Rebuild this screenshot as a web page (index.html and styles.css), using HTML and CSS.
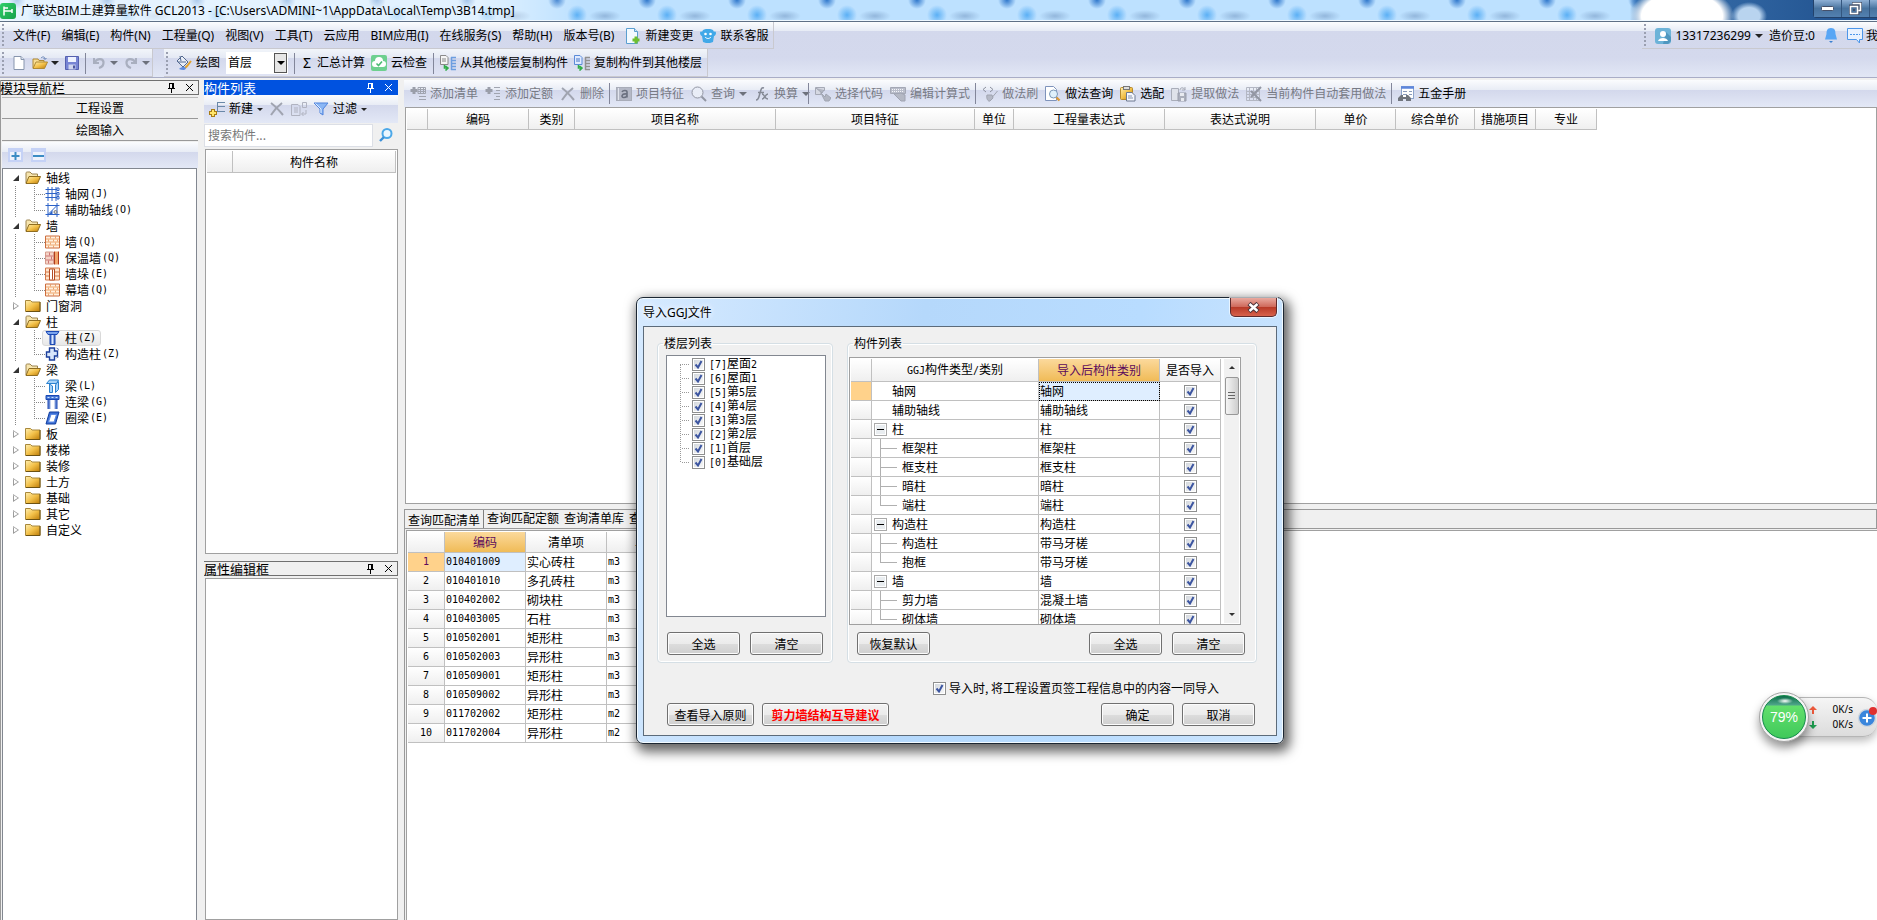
FILE: index.html
```html
<!DOCTYPE html>
<html lang="zh-CN">
<head>
<meta charset="utf-8">
<title>广联达BIM土建算量软件 GCL2013</title>
<link rel="stylesheet" href="styles.css">
</head>
<body>
<svg class="defs" aria-hidden="true">
  <defs>
    <linearGradient id="gold" x1="0" y1="0" x2="1" y2="1"><stop offset="0" stop-color="#ffefb0"/><stop offset=".5" stop-color="#f3c14a"/><stop offset="1" stop-color="#bd7c08"/></linearGradient>
    <linearGradient id="blue" x1="0" y1="0" x2="1" y2="0"><stop offset="0" stop-color="#1b48b4"/><stop offset=".5" stop-color="#dbe9ff"/><stop offset="1" stop-color="#1b48b4"/></linearGradient>
    <linearGradient id="green" x1="0" y1="0" x2="1" y2="1"><stop offset="0" stop-color="#2fcf6a"/><stop offset="1" stop-color="#17a04a"/></linearGradient>
  </defs>
  <symbol id="app" viewBox="0 0 16 16"><rect x="0" y="0" width="16" height="16" rx="3" fill="url(#green)"/><path d="M4 3.500v9M4 5h4M4 8h8M12 6v4" stroke="#fff" stroke-width="1.500" fill="none"/></symbol>
  <symbol id="new" viewBox="0 0 16 16"><path d="M3 1.500h7l3 3v10H3z" fill="#fff" stroke="#8795ad"/><path d="M10 1.500v3h3" fill="#dde5f2" stroke="#8795ad"/></symbol>
  <symbol id="open" viewBox="0 0 16 16"><path d="M1 13V4h5l1 1.500h5V7" fill="#f7dd94" stroke="#b08a34"/><path d="M1 13.500 4 7h11.500l-3 6.500z" fill="url(#gold)" stroke="#b08a34"/><path d="M9 3c2-2 4-1 4 1m-1.500-1 1.500 1.500L14.500 3" fill="none" stroke="#6683b5"/></symbol>
  <symbol id="save" viewBox="0 0 16 16"><path d="M1.500 1.500h13v13h-13z" fill="#7784d4" stroke="#5560ae"/><path d="M4 2h8v5H4z" fill="#eef2ff"/><path d="M4.500 9.500h7v5h-7z" fill="#cfd5ee"/><path d="M9 10.500h2v3H9z" fill="#4c57a0"/></symbol>
  <symbol id="undo" viewBox="0 0 16 16"><path d="M3 3v5h5" fill="none" stroke="#a9afbf" stroke-width="2"/><path d="M3.500 7.500C6 3 12 3 12.500 7c.3 3-1.500 5-4.500 6" fill="none" stroke="#a9afbf" stroke-width="2.200"/></symbol>
  <symbol id="redo" viewBox="0 0 16 16"><path d="M13 3v5H8" fill="none" stroke="#a9afbf" stroke-width="2"/><path d="M12.500 7.500C10 3 4 3 3.500 7c-.3 3 1.500 5 4.500 6" fill="none" stroke="#a9afbf" stroke-width="2.200"/></symbol>
  <symbol id="paint" viewBox="0 0 16 16"><path d="M1 6 6 1l6 6-5 5z" fill="#e9eef8" stroke="#53698f"/><path d="M5 6 4 1M2 7h8" stroke="#53698f" fill="none"/><path d="m15 6-4 5-2 2" stroke="#e3a32c" stroke-width="2" fill="none"/><path d="M3 14c3-3 6-2 7-1-1 3-4 2-7 1" fill="#5d8ce0"/></symbol>
  <symbol id="cloudok" viewBox="0 0 16 16"><rect width="16" height="16" rx="2" fill="#6ed08f"/><path d="M4 12a3 3 0 0 1 0-6 4 4 0 0 1 8 0 3 3 0 0 1 0 6z" fill="#fff"/><path d="m5.500 8.500 2 2 3.500-4" fill="none" stroke="#4dbb74" stroke-width="1.600"/></symbol>
  <symbol id="copyfrom" viewBox="0 0 16 16"><path d="M.5.500H6l2 2v7H.5z" fill="#f5f5f5" stroke="#8a8a8a"/><path d="M2 4h4M2 6h4" stroke="#888"/><path d="M11 2.500h5M11 5.500h5M11 8.500h5M11 11.500h5M11 14.500h5M11.500 2v13" stroke="#6d9ee0" stroke-width="1.500"/><path d="M4.500 10v3H8M5.500 11 8 13l-2.500 2.500" fill="none" stroke="#32ae4a" stroke-width="1.600"/></symbol>
  <symbol id="copyto" viewBox="0 0 16 16"><path d="M.5.500H6l2 2v7H.5z" fill="#dfeaff" stroke="#5b8bd8"/><path d="M2 4h4M2 6h4" stroke="#4776c6"/><path d="M11 2.500h5M11 5.500h5M11 8.500h5M11 11.500h5M11 14.500h5M11.500 2v13" stroke="#909090" stroke-width="1.500"/><path d="M4.500 10v3H8M5.500 11 8 13l-2.500 2.500" fill="none" stroke="#32ae4a" stroke-width="1.600"/></symbol>
  <symbol id="docplus" viewBox="0 0 16 16"><path d="M1.500.5h8l3 3v12h-11z" fill="#f3faff" stroke="#5b9fd0"/><path d="M9.500.5v3h3" fill="#cfe6f5" stroke="#5b9fd0"/><path d="M11 8.500v7M7.500 12h7" stroke="#6fbf2f" stroke-width="3"/></symbol>
  <symbol id="service" viewBox="0 0 16 16"><path d="M0 5c0-1 1-2 2-1 1-3 3-3 6-3s5 0 6 3c1-1 2 0 2 1s-1 3-2 3l-1 6-3 1H6l-3-1-1-6C1 8 0 6 0 5z" fill="#41a8e8"/><circle cx="5.500" cy="6" r="1.300" fill="#fff"/><circle cx="10.500" cy="6" r="1.300" fill="#fff"/><path d="M5 9c2 2 4 2 6 0" stroke="#fff" fill="none"/></symbol>
  <symbol id="user" viewBox="0 0 16 16"><rect width="16" height="16" rx="3" fill="#6db3d8"/><path d="m11 4 5 5v4l-3 3H8z" fill="#4f97bf"/><circle cx="8" cy="6" r="3" fill="#fff"/><path d="M3 13c1-4 9-4 10 0z" fill="#fff"/></symbol>
  <symbol id="bell" viewBox="0 0 16 16"><path d="M8 0c4 0 4.500 3 4.500 6l1.500 5.500H2L3.500 6C3.500 3 4 0 8 0z" fill="#58a6f5"/><path d="M6 13h4l-2 2z" fill="#3a80d0"/></symbol>
  <symbol id="chat" viewBox="0 0 16 16"><path d="M.5.500h15v11h-3v3.500l-3-3.500h-9z" fill="#e8f2ff" stroke="#4c96ea"/><path d="M3 6.500h2M6 6.500h2M9 6.500h2M12 6.500h1" stroke="#4c96ea"/></symbol>
  <symbol id="pin" viewBox="0 0 9 10"><path d="M2 .5h5M2.500.5v5M6.500.5v5M5.500.5v5M1 5.500h7M4.500 6v4" fill="none" stroke="currentColor"/></symbol>
  <symbol id="close" viewBox="0 0 9 9"><path d="m1 1 7 7M8 1 1 8" fill="none" stroke="currentColor"/></symbol>
  <symbol id="expand" viewBox="0 0 16 16"><rect x="0" y="1" width="15" height="14" fill="#c5d2f6"/><rect x="2" y="5" width="11" height="8" fill="#eef2fc"/><path d="M7.500 5v8M3.500 9h8" stroke="#3c8cc4" stroke-width="2"/></symbol>
  <symbol id="collapse" viewBox="0 0 16 16"><rect x="0" y="1" width="15" height="14" fill="#c5d2f6"/><rect x="2" y="5" width="11" height="8" fill="#eef2fc"/><path d="M2 9h11" stroke="#3c8cc4" stroke-width="2"/></symbol>
  <symbol id="newitem" viewBox="0 0 16 16"><path d="M8 1.500h8M8 5.500h8M8 10.500h8M8.500 1v10" stroke="#6a88a8" fill="none"/><path d="M4 8v8M0 12h8" stroke="#a97d14" stroke-width="4"/><path d="M4 9v6M1 12h6" stroke="#ffe56b" stroke-width="2"/></symbol>
  <symbol id="del" viewBox="0 0 16 16"><path d="M2 2c4 3 7 6 12 12M13 2C9 5 5 9 2 14" stroke="#a0a4b0" stroke-width="2" fill="none"/></symbol>
  <symbol id="copyitem" viewBox="0 0 16 16"><path d="M.5 3.500H7l2 2v9H.5zM3 7h4M3 9h4M3 11h4M11.500 1.500h4v5h-4zM15 9v4h-4m1.500-2-2 2 2 2" stroke="#b0b3c0" fill="none"/></symbol>
  <symbol id="funnel" viewBox="0 0 16 16"><path d="M1 2h14L10 8v6l-3-2V8z" fill="#8ab6f5" stroke="#4f83dd"/><path d="M2.500 2.500 8 8v4" stroke="#e5f1ff" fill="none"/></symbol>
  <symbol id="search" viewBox="0 0 16 16"><circle cx="9" cy="6.500" r="4.500" fill="#eaf6ff" stroke="#4ca8e8" stroke-width="2"/><path d="m6 10-4 4" stroke="#3b90d8" stroke-width="2.400"/></symbol>
  <symbol id="addlist" viewBox="0 0 16 16"><path d="M4 1v7M.5 4.500h7" stroke="#9a9ea9" stroke-width="3"/><path d="M8 1.500h7.500v6H8zM8 3.500h8M8 5.500h8M10.500 2v6M13.500 2v6M9 10.500h7M9 13.500h7" stroke="#a0a4af" fill="none"/></symbol>
  <symbol id="addnorm" viewBox="0 0 16 16"><path d="M4 1v7M.5 4.500h7" stroke="#9a9ea9" stroke-width="3"/><path d="M9 1.500h6M11 4.500h4M9 7.500h6M11 10.500h4M9 13.500h6" stroke="#a0a4af" fill="none"/></symbol>
  <symbol id="feature" viewBox="0 0 16 16"><rect x=".5" y="1.500" width="15" height="13" fill="#b4b8c6" stroke="#a8acb8"/><path d="M2.500 2v12" stroke="#e2e5ee"/><path d="M6 6c1-2 5-2 5 0v5.500M11 8c-6-1-6 4-3 3.500 2 0 3-1.500 3-2.500" fill="none" stroke="#6a707f" stroke-width="1.600"/></symbol>
  <symbol id="mag" viewBox="0 0 16 16"><circle cx="6.500" cy="6.500" r="5.500" fill="#e9edf7" stroke="#9296a3"/><path d="m10.500 10.500 4.500 4.500" stroke="#9296a3" stroke-width="2"/></symbol>
  <symbol id="fx" viewBox="0 0 16 16"><path d="M10 2C7 1 7 4 6 7s-1 7-4 7M4 6.500h6M8 8c3 0 2 5 6 5M14 8c-3 0-3 5-6 5" stroke="#858a96" stroke-width="1.500" fill="none"/></symbol>
  <symbol id="code" viewBox="0 0 16 16"><path d="M.5 1.500h9v3H6v4H.5z" fill="#d5d8e2" stroke="#a5a9b5"/><path d="m1 2 6 5 2-3M6 7l4 4 1-3 5 4-2 3h-4z" fill="#b1b5c1" stroke="#a0a5b2"/></symbol>
  <symbol id="edit" viewBox="0 0 16 16"><path d="M.5 1.500h15v6H.5z" fill="#b9bdca" stroke="#a4a8b5"/><path d="M2 3.500h12M2 5.500h12" stroke="#f4f5f9" stroke-dasharray="1 1"/><path d="m4 8 7 7h4V9l-4-2z" fill="#b4b8c4" stroke="#a0a4b2"/></symbol>
  <symbol id="brush" viewBox="0 0 16 16"><path d="M4 1 1 3.500 4 6M8 1l3 2.500L8 6" stroke="#8d919e" fill="none"/><path d="m15.500 5-5 6M5 9h5l1 3-3 3c-2 1-4-3-3-6z" fill="#b5b9c6" stroke="#a0a4b0"/></symbol>
  <symbol id="docfind" viewBox="0 0 16 16"><path d="M.5.500h8l3 3v11H.5z" fill="#fff" stroke="#7e93bb"/><circle cx="8.500" cy="8" r="4" fill="#dff1fb" stroke="#7a98b8"/><path d="m11.500 11.500 3 3" stroke="#d99a3a" stroke-width="2.400"/></symbol>
  <symbol id="paste" viewBox="0 0 16 16"><rect x=".5" y="1.500" width="12" height="12" rx="1" fill="url(#gold)" stroke="#b5892c"/><rect x="3.500" y=".5" width="6" height="3" fill="#ddd" stroke="#777"/><path d="M6.500 6.500H12l3 3v5.500H6.500z" fill="#f6f8ff" stroke="#6d7990"/><path d="M8 10h4M8 12h5" stroke="#8894ab"/></symbol>
  <symbol id="extract" viewBox="0 0 16 16"><path d="M.5 2.500h7v12h-7zM9 4c0-3 4-3 5 0m0-3v3h-3" fill="#dfe2ea" stroke="#a9adb9"/><path d="M7 7h8v8H7z" fill="#abafbc" stroke="#999dab"/><path d="M9 7h4v3H9zM10 12h3v3h-3z" fill="#e8eaf0"/></symbol>
  <symbol id="auto" viewBox="0 0 16 16"><path d="M.5 1.500h13v13H.5zM.5 5.500h13M.5 8.500h13M.5 11.500h13M3.500 1.500v13M7.500 1.500v13M10.500 1.500v13" fill="none" stroke="#b3b7c3"/><path d="m5 5 10 10M15 1 5 11" stroke="#9296a3" stroke-width="2"/></symbol>
  <symbol id="manual" viewBox="0 0 16 16"><rect x="3.500" y=".5" width="12" height="12" fill="#fff" stroke="#8da4cc"/><path d="M3 1.500h13" stroke="#5d86dc" stroke-width="2.500"/><path d="M5 5.500h4M11 5.500h3M5 8.500h4M11 8.500h3" stroke="#8a9bbb"/><path d="M0 15v-3l3-3h2v2h3V9h2l3 3v3H8v-2H5v2z" fill="#70757d"/></symbol>
  <symbol id="fopen" viewBox="0 0 16 14"><path d="M1 12V2c0-1 1-1 2-1h2l2 2h5.500v3" fill="#f7e5ae" stroke="#9c8450"/><path d="m1 12.500 3-7h11.500l-3 7z" fill="url(#gold)" stroke="#8f6d20"/></symbol>
  <symbol id="fclosed" viewBox="0 0 16 14"><path d="M.5 12.500v-11h5l1.500 1.500h8v9.500z" fill="url(#gold)" stroke="#a8883c"/><path d="M15 3v9.500H1" fill="none" stroke="#6d5212"/></symbol>
  <symbol id="grid" viewBox="0 0 14 14"><path d="M0 2.500h12M0 6.500h12M0 10.500h12M2.500 0v14M6.500 0v14M10.500 0v14" stroke="#2c62c8" fill="none"/><path d="M11.500 1h2v2.500h-2zM11.500 5.500h2V8h-2zM11.500 9.500h2V12h-2z" fill="#fff" stroke="#2c62c8"/></symbol>
  <symbol id="auxgrid" viewBox="0 0 14 14"><path d="M0 2.500h14M0 11.500h14M2.500 0v14M11.500 0v14M3 11l8-8" stroke="#2c62c8" fill="none"/><path d="m7 7v4H4z" fill="#2c62c8"/><circle cx="10" cy="9" r="1.500" fill="#ddd" stroke="#777"/></symbol>
  <symbol id="wall" viewBox="0 0 15 13"><path d="M.5.5h14v12H.5z" fill="#fff0df"/><path d="M0 3.500h15M0 6.500h15M0 9.500h15M5.500 1v2M10.500 1v2M3.500 4v2M8.500 4v2M12.500 4v2M5.500 7v2M10.500 7v2M3.500 10v2M8.500 10v2" stroke="#eda56c" fill="none"/><path d="M.5.5h14v12H.5z" fill="none" stroke="#cc6c3c"/></symbol>
  <symbol id="insul" viewBox="0 0 15 13"><path d="M.5.500h8v12h-8z" fill="#f6d4c7" stroke="#d59c8c"/><path d="M.5 4.500h8M.5 8.500h8M4.500 1v3M6.500 5v3M3.500 9v3" stroke="#c77"/><path d="M9.500 0v13M13.500 0v13" stroke="#b23b1c"/><path d="M11.500 0v13" stroke="#f0a46c" stroke-width="3"/></symbol>
  <symbol id="pier" viewBox="0 0 15 13"><path d="M.5.500h14v12H.5z" fill="#ffe3c9" stroke="#d4784a"/><path d="M.5 4.500h14M.5 8.500h14" stroke="#d4784a"/><path d="M4.500 1.500h5v11h-5zM7.500 2v10" fill="#fff" stroke="#b54c22"/></symbol>
  <symbol id="column" viewBox="0 0 14 14"><path d="M.5.500h13l-2 3h-9z" fill="#7ba4ec" stroke="#1b48b4"/><path d="M4.500 3.500h5v10h-5z" fill="url(#blue)" stroke="#1b48b4"/></symbol>
  <symbol id="ccolumn" viewBox="0 0 14 14"><path d="M4 1h5v3h3v5H9v4H4v-3H1V5h3z" fill="#d9e6fb" stroke="#1b3f9c" stroke-width="1.400"/><path d="m11 1 2 1-1 2M11 11l2-1" stroke="#7386b8" fill="none"/></symbol>
  <symbol id="beam" viewBox="0 0 14 14"><path d="M1 4.500 4 1h9l-2 3.500zM4 5l3 2v6.500H4zM11 4.500l2-2v8l-3 3V6z" fill="#a5d2f8" stroke="#2c82cf"/></symbol>
  <symbol id="lintel" viewBox="0 0 14 14"><path d="M.5.500h13v4H.5z" fill="#4376d4" stroke="#1b48b4"/><path d="M2 2.500h10" stroke="#cfe0ff" stroke-dasharray="2 2"/><path d="M2 5h3v9H2zM9 5h3v9H9z" fill="url(#blue)"/></symbol>
  <symbol id="ring" viewBox="0 0 14 14"><path d="M4 1h9.500L10 13H.5z" fill="#3b6ed4" stroke="#123f9f"/><path d="M5.500 3.500H11L8.500 11H3z" fill="#fff" stroke="#5c8ae4"/></symbol>
</svg>

<header class="titlebar">
  <svg class="i16"><use href="#app"/></svg>
  <h1>广联达BIM土建算量软件 GCL2013 - [C:\Users\ADMINI~1\AppData\Local\Temp\3B14.tmp]</h1>
  <div class="winbtns">
    <button aria-label="最小化"><svg width="13" height="6" viewBox="0 0 13 6"><rect x=".5" y=".5" width="12" height="4" rx="1" fill="#fff" stroke="#44506a"/></svg></button>
    <button aria-label="还原"><svg width="13" height="13" viewBox="0 0 13 13"><path d="M3 1h9v8h-2M1 4h8v8H1z" fill="none" stroke="#44506a" stroke-width="3"/><path d="M3.500 1.500h8v7h-2M1.500 4.500h7v7h-7z" fill="none" stroke="#fff" stroke-width="1.600"/><rect x="4" y="7" width="2" height="2" fill="#44506a"/></svg></button>
    <button aria-label="关闭"></button>
  </div>
</header>

<div class="dock">
  <div class="dockrow">
    <nav class="bar menubar">
      <i class="grip"></i>
      <button>文件(F)</button><button>编辑(E)</button><button>构件(N)</button><button>工程量(Q)</button><button>视图(V)</button><button>工具(T)</button><button>云应用</button><button>BIM应用(I)</button><button>在线服务(S)</button><button>帮助(H)</button><button>版本号(B)</button>
      <button class="tight"><svg class="i16"><use href="#docplus"/></svg>新建变更</button>
      <button class="tight"><svg class="i16"><use href="#service"/></svg>联系客服</button>
    </nav>
    <div class="bar account">
      <i class="grip"></i>
      <button><svg class="i16"><use href="#user"/></svg>13317236299<i class="arr"></i></button>
      <span>造价豆:0</span>
      <button aria-label="通知"><svg class="i16"><use href="#bell"/></svg></button>
      <button><svg class="i16"><use href="#chat"/></svg>我</button>
    </div>
  </div>
  <div class="dockrow tools">
    <div class="bar files">
      <i class="grip"></i>
      <button aria-label="新建"><svg class="i16"><use href="#new"/></svg></button>
      <button aria-label="打开"><svg class="i16"><use href="#open"/></svg><i class="arr"></i></button>
      <button aria-label="保存"><svg class="i16"><use href="#save"/></svg></button>
      <i class="sep"></i>
      <button aria-label="撤销"><svg class="i16"><use href="#undo"/></svg><i class="arr dim"></i></button>
      <button aria-label="重做"><svg class="i16"><use href="#redo"/></svg><i class="arr dim"></i></button>
    </div>
    <div class="bar build">
      <i class="grip"></i>
      <button><svg class="i16"><use href="#paint"/></svg>绘图</button>
      <span class="combo"><select aria-label="楼层"><option>首层</option></select><i></i></span>
      <i class="sep"></i>
      <button><b class="sigma">Σ</b>汇总计算</button>
      <button><svg class="i16"><use href="#cloudok"/></svg>云检查</button>
      <i class="sep"></i>
      <button><svg class="i16"><use href="#copyfrom"/></svg>从其他楼层复制构件</button>
      <button><svg class="i16"><use href="#copyto"/></svg>复制构件到其他楼层</button>
    </div>
  </div>
</div>

<main class="work">
  <section class="side nav">
    <div class="ptitle"><h2>模块导航栏</h2><button aria-label="固定"><svg class="pin"><use href="#pin"/></svg></button><button aria-label="关闭"><svg class="x"><use href="#close"/></svg></button></div>
    <button class="navbtn">工程设置</button>
    <button class="navbtn">绘图输入</button>
    <div class="band treetools"><button aria-label="展开"><svg class="i16"><use href="#expand"/></svg></button><button aria-label="折叠"><svg class="i16"><use href="#collapse"/></svg></button></div>
    <ul class="tree">
      <li><div class="node"><i class="tri on"></i><svg class="fold"><use href="#fopen"/></svg>轴线</div>
        <ul>
          <li><svg><use href="#grid"/></svg>轴网<span class="mono">(J)</span></li>
          <li><svg><use href="#auxgrid"/></svg>辅助轴线<span class="mono">(O)</span></li>
        </ul></li>
      <li><div class="node"><i class="tri on"></i><svg class="fold"><use href="#fopen"/></svg>墙</div>
        <ul>
          <li><svg><use href="#wall"/></svg>墙<span class="mono">(Q)</span></li>
          <li><svg><use href="#insul"/></svg>保温墙<span class="mono">(Q)</span></li>
          <li><svg><use href="#pier"/></svg>墙垛<span class="mono">(E)</span></li>
          <li><svg><use href="#wall"/></svg>幕墙<span class="mono">(Q)</span></li>
        </ul></li>
      <li><div class="node"><i class="tri"></i><svg class="fold"><use href="#fclosed"/></svg>门窗洞</div></li>
      <li><div class="node"><i class="tri on"></i><svg class="fold"><use href="#fopen"/></svg>柱</div>
        <ul>
          <li><span class="sel"><svg><use href="#column"/></svg>柱<span class="mono">(Z)</span></span></li>
          <li><svg><use href="#ccolumn"/></svg>构造柱<span class="mono">(Z)</span></li>
        </ul></li>
      <li><div class="node"><i class="tri on"></i><svg class="fold"><use href="#fopen"/></svg>梁</div>
        <ul>
          <li><svg><use href="#beam"/></svg>梁<span class="mono">(L)</span></li>
          <li><svg><use href="#lintel"/></svg>连梁<span class="mono">(G)</span></li>
          <li><svg><use href="#ring"/></svg>圈梁<span class="mono">(E)</span></li>
        </ul></li>
      <li><div class="node"><i class="tri"></i><svg class="fold"><use href="#fclosed"/></svg>板</div></li>
      <li><div class="node"><i class="tri"></i><svg class="fold"><use href="#fclosed"/></svg>楼梯</div></li>
      <li><div class="node"><i class="tri"></i><svg class="fold"><use href="#fclosed"/></svg>装修</div></li>
      <li><div class="node"><i class="tri"></i><svg class="fold"><use href="#fclosed"/></svg>土方</div></li>
      <li><div class="node"><i class="tri"></i><svg class="fold"><use href="#fclosed"/></svg>基础</div></li>
      <li><div class="node"><i class="tri"></i><svg class="fold"><use href="#fclosed"/></svg>其它</div></li>
      <li><div class="node"><i class="tri"></i><svg class="fold"><use href="#fclosed"/></svg>自定义</div></li>
    </ul>
  </section>

  <div class="side mid">
    <section class="parts">
      <div class="ptitle active"><h2>构件列表</h2><button aria-label="固定"><svg class="pin"><use href="#pin"/></svg></button><button aria-label="关闭"><svg class="x"><use href="#close"/></svg></button></div>
      <div class="band parttools">
        <button><svg class="i16"><use href="#newitem"/></svg>新建<i class="arr small"></i></button>
        <button aria-label="删除"><svg class="i16"><use href="#del"/></svg></button>
        <button aria-label="复制"><svg class="i16"><use href="#copyitem"/></svg></button>
        <button><svg class="i16"><use href="#funnel"/></svg>过滤<i class="arr small"></i></button>
      </div>
      <div class="find"><input type="text" placeholder="搜索构件..." aria-label="搜索构件"><button aria-label="搜索"><svg class="i16"><use href="#search"/></svg></button></div>
      <div class="box"><table class="grid partgrid"><thead><tr><th class="c26"></th><th>构件名称</th></tr></thead></table></div>
    </section>
    <section class="props">
      <div class="ptitle"><h2>属性编辑框</h2><button aria-label="固定"><svg class="pin"><use href="#pin"/></svg></button><button aria-label="关闭"><svg class="x"><use href="#close"/></svg></button></div>
      <div class="box"></div>
    </section>
  </div>

  <div class="center">
    <section class="upper">
      <div class="band maintools">
        <button disabled><svg class="i16"><use href="#addlist"/></svg>添加清单</button>
        <button disabled><svg class="i16"><use href="#addnorm"/></svg>添加定额</button>
        <button disabled><svg class="i16"><use href="#del"/></svg>删除</button>
        <i class="sep"></i>
        <button disabled><svg class="i16"><use href="#feature"/></svg>项目特征</button>
        <button disabled><svg class="i16"><use href="#mag"/></svg>查询<i class="arr dim"></i></button>
        <button disabled class="last"><svg class="i16"><use href="#fx"/></svg>换算<i class="arr dim"></i></button>
        <i class="sep"></i>
        <button disabled><svg class="i16"><use href="#code"/></svg>选择代码</button>
        <button disabled><svg class="i16"><use href="#edit"/></svg>编辑计算式</button>
        <i class="sep"></i>
        <button disabled><svg class="i16"><use href="#brush"/></svg>做法刷</button>
        <button><svg class="i16"><use href="#docfind"/></svg>做法查询</button>
        <button><svg class="i16"><use href="#paste"/></svg>选配</button>
        <button disabled><svg class="i16"><use href="#extract"/></svg>提取做法</button>
        <button disabled><svg class="i16"><use href="#auto"/></svg>当前构件自动套用做法</button>
        <i class="sep"></i>
        <button><svg class="i16"><use href="#manual"/></svg>五金手册</button>
      </div>
      <div class="box">
        <table class="grid maingrid">
          <colgroup><col class="w21"><col class="w101"><col class="w46"><col class="w201"><col class="w199"><col class="w39"><col class="w151"><col class="w151"><col class="w80"><col class="w79"><col class="w61"><col class="w61"></colgroup>
          <thead><tr><th></th><th>编码</th><th>类别</th><th>项目名称</th><th>项目特征</th><th>单位</th><th>工程量表达式</th><th>表达式说明</th><th>单价</th><th>综合单价</th><th>措施项目</th><th>专业</th></tr></thead>
        </table>
      </div>
    </section>
    <section class="lower">
      <div class="tabs"><button class="on">查询匹配清单</button><button>查询匹配定额</button><button>查询清单库</button><button>查询定额库</button></div>
      <div class="box">
        <table class="grid rows">
          <colgroup><col class="w37"><col class="w81"><col class="w81"><col class="w81"></colgroup>
          <thead><tr><th></th><th class="hot">编码</th><th>清单项</th><th>单位</th></tr></thead>
          <tbody>
            <tr class="cur"><th>1</th><td class="mono">010401009</td><td>实心砖柱</td><td class="mono">m3</td></tr>
            <tr><th>2</th><td class="mono">010401010</td><td>多孔砖柱</td><td class="mono">m3</td></tr>
            <tr><th>3</th><td class="mono">010402002</td><td>砌块柱</td><td class="mono">m3</td></tr>
            <tr><th>4</th><td class="mono">010403005</td><td>石柱</td><td class="mono">m3</td></tr>
            <tr><th>5</th><td class="mono">010502001</td><td>矩形柱</td><td class="mono">m3</td></tr>
            <tr><th>6</th><td class="mono">010502003</td><td>异形柱</td><td class="mono">m3</td></tr>
            <tr><th>7</th><td class="mono">010509001</td><td>矩形柱</td><td class="mono">m3</td></tr>
            <tr><th>8</th><td class="mono">010509002</td><td>异形柱</td><td class="mono">m3</td></tr>
            <tr><th>9</th><td class="mono">011702002</td><td>矩形柱</td><td class="mono">m2</td></tr>
            <tr><th>10</th><td class="mono">011702004</td><td>异形柱</td><td class="mono">m2</td></tr>
          </tbody>
        </table>
      </div>
    </section>
  </div>
</main>

<div class="dialog" role="dialog" aria-labelledby="dlgtitle">
  <div class="dlghead">
    <h2 id="dlgtitle">导入GGJ文件</h2>
    <button aria-label="关闭"><svg width="13" height="11" viewBox="0 0 13 11"><path d="m2 1.500 9 8m0-8-9 8" stroke="#4b3338" stroke-width="4.500"/><path d="m2.500 2 8 7m0-7-8 7" stroke="#fff" stroke-width="2.500"/></svg></button>
  </div>
  <div class="dlgbody">
    <div class="groups">
      <fieldset class="floors">
        <legend>楼层列表</legend>
        <ul class="floorlist">
          <li><label><input type="checkbox" checked><span><span class="mono">[7]</span>屋面<span class="mono">2</span></span></label></li>
          <li><label><input type="checkbox" checked><span><span class="mono">[6]</span>屋面<span class="mono">1</span></span></label></li>
          <li><label><input type="checkbox" checked><span><span class="mono">[5]</span>第<span class="mono">5</span>层</span></label></li>
          <li><label><input type="checkbox" checked><span><span class="mono">[4]</span>第<span class="mono">4</span>层</span></label></li>
          <li><label><input type="checkbox" checked><span><span class="mono">[3]</span>第<span class="mono">3</span>层</span></label></li>
          <li><label><input type="checkbox" checked><span><span class="mono">[2]</span>第<span class="mono">2</span>层</span></label></li>
          <li><label><input type="checkbox" checked><span><span class="mono">[1]</span>首层</span></label></li>
          <li><label><input type="checkbox" checked><span><span class="mono">[0]</span>基础层</span></label></li>
        </ul>
        <div class="btns"><button class="btn">全选</button><button class="btn">清空</button></div>
      </fieldset>
      <fieldset class="types">
        <legend>构件列表</legend>
        <div class="typebox">
          <table class="grid typegrid">
            <colgroup><col class="w21"><col class="w167"><col class="w121"><col class="w61"></colgroup>
            <thead><tr><th></th><th><span class="mono">GGJ</span>构件类型<span class="mono">/</span>类别</th><th class="hot">导入后构件类别</th><th>是否导入</th></tr></thead>
            <tbody>
              <tr class="cur"><th></th><td class="top">轴网</td><td class="focus">轴网</td><td><input type="checkbox" checked aria-label="轴网"></td></tr>
              <tr><th></th><td class="top">辅助轴线</td><td>辅助轴线</td><td><input type="checkbox" checked aria-label="辅助轴线"></td></tr>
              <tr><th></th><td><div class="par"><button aria-label="折叠"></button>柱</div></td><td>柱</td><td><input type="checkbox" checked aria-label="柱"></td></tr>
              <tr><th></th><td><div class="kid">框架柱</div></td><td>框架柱</td><td><input type="checkbox" checked aria-label="框架柱"></td></tr>
              <tr><th></th><td><div class="kid">框支柱</div></td><td>框支柱</td><td><input type="checkbox" checked aria-label="框支柱"></td></tr>
              <tr><th></th><td><div class="kid">暗柱</div></td><td>暗柱</td><td><input type="checkbox" checked aria-label="暗柱"></td></tr>
              <tr><th></th><td><div class="kid end">端柱</div></td><td>端柱</td><td><input type="checkbox" checked aria-label="端柱"></td></tr>
              <tr><th></th><td><div class="par"><button aria-label="折叠"></button>构造柱</div></td><td>构造柱</td><td><input type="checkbox" checked aria-label="构造柱"></td></tr>
              <tr><th></th><td><div class="kid">构造柱</div></td><td>带马牙槎</td><td><input type="checkbox" checked aria-label="构造柱"></td></tr>
              <tr><th></th><td><div class="kid end">抱框</div></td><td>带马牙槎</td><td><input type="checkbox" checked aria-label="抱框"></td></tr>
              <tr><th></th><td><div class="par"><button aria-label="折叠"></button>墙</div></td><td>墙</td><td><input type="checkbox" checked aria-label="墙"></td></tr>
              <tr><th></th><td><div class="kid">剪力墙</div></td><td>混凝土墙</td><td><input type="checkbox" checked aria-label="剪力墙"></td></tr>
              <tr><th></th><td><div class="kid end">砌体墙</div></td><td>砌体墙</td><td><input type="checkbox" checked aria-label="砌体墙"></td></tr>
            </tbody>
          </table>
          <div class="scroll"><i class="up"></i><i class="thumb"></i><i class="down"></i></div>
        </div>
        <div class="btns"><button class="btn">恢复默认</button><button class="btn push">全选</button><button class="btn">清空</button></div>
      </fieldset>
    </div>
    <label class="also"><input type="checkbox" checked><span>导入时, 将工程设置页签工程信息中的内容一同导入</span></label>
    <div class="btns foot">
      <button class="btn wide">查看导入原则</button><button class="btn red">剪力墙结构互导建议</button><button class="btn push">确定</button><button class="btn">取消</button>
    </div>
  </div>
</div>

<aside class="speed">
  <div class="rates"><span><svg width="8" height="8" viewBox="0 0 8 8"><path d="M4 0 8 4H5v4H3V4H0z" fill="#ee5a3c"/></svg>0K/s</span><span><svg width="8" height="8" viewBox="0 0 8 8"><path d="M4 8 0 4h3V0h2v4h3z" fill="#1fa052"/></svg>0K/s</span></div>
  <svg class="plus" viewBox="0 0 20 20"><circle cx="10" cy="11" r="8.500" fill="#3a86dc" stroke="#cfd6de" stroke-width="1.500"/><path d="M10 6.500v9M5.500 11h9" stroke="#fff" stroke-width="2"/><circle cx="16" cy="4" r="4" fill="#e02f2f"/></svg>
  <div class="ball"><span>79%</span></div>
</aside>
</body>
</html>
```
FILE: styles.css
```css
* { box-sizing: border-box; }
html, body { height: 100%; }
body {
  margin: 0;
  display: flex;
  flex-direction: column;
  overflow: hidden;
  position: relative;
  background: #f0f0f0;
  color: #000;
  font: 12px/16px "Noto Sans CJK SC", sans-serif;
}
h1, h2, ul { margin: 0; padding: 0; font-size: inherit; font-weight: normal; }
ul { list-style: none; }
button { margin: 0; padding: 0; border: 0; background: none; font: inherit; color: inherit; white-space: nowrap; }
button svg, svg { display: block; flex: none; }
.defs { position: absolute; width: 0; height: 0; }
.i16 { width: 16px; height: 16px; }
.mono { font-family: "DejaVu Sans Mono", monospace; font-size: 10px; }

/* window title */
.titlebar {
  flex: none;
  height: 22px;
  display: flex;
  align-items: center;
  gap: 5px;
  border-bottom: 1px solid #5f7085;
  box-shadow: inset 0 -1px #eef8ff;
  background:
    linear-gradient(90deg, #ffffffa0, #ffffff90 480px, #ffffff00 580px),
    radial-gradient(ellipse 52px 30px at 1682px 16px, #fff 78%, #fff0),
    radial-gradient(ellipse 18px 14px at 1749px 16px, #b9d4ef 60%, #b9d4ef00),
    linear-gradient(90deg, #3a72ae00 1630px, #3a72ae 1640px, #1f4f8c),
    radial-gradient(circle 9px at 17px 0, #2f77cc, #2f77cc00) 0 0 / 90px 21px,
    radial-gradient(circle 10px at 37px 15px, #5bb0f5, #5bb0f500) 0 0 / 90px 21px,
    radial-gradient(ellipse 16px 6px at 65px 16px, #93b7dc, #93b7dc00) 0 0 / 90px 21px,
    #bde1ff;
}
.titlebar h1 { font-family: "Noto Sans", "Noto Sans CJK SC", sans-serif; }
.winbtns { margin-left: auto; align-self: flex-start; display: flex; height: 18px; border: 1px solid #23426b; border-width: 0 0 1px 1px; border-radius: 0 0 0 4px; }
.winbtns button { width: 28px; display: flex; align-items: center; justify-content: center; border-right: 1px solid #34567f; background: linear-gradient(#8fb0d5, #48739f 50%, #5380b0); }
.winbtns button:last-child { width: 7px; border: 0; }

/* docked bars */
.dock { flex: none; height: 56px; border-bottom: 1px solid #a9adc6; background: linear-gradient(#fcfdfe, #e6ebf5 9px, #d3d8ec 9px, #d4d9ed 36px, #e2e7f5); font-family: "Noto Sans", "Noto Sans CJK SC", sans-serif; }
.dockrow { display: flex; height: 27px; }
.bar { display: flex; align-items: center; padding-top: 1px; border: 1px solid #c9c9cf; border-width: 0 1px 1px 0; }
.bar button { display: flex; align-items: center; gap: 4px; }
.grip { width: 3px; height: 23px; margin-left: 2px; background: repeating-linear-gradient(#9a9fb0 0 2px, #fff0 2px 4px) 0 0 / 2px 100% no-repeat; }
.menubar { gap: 11px; padding-right: 5px; }
.menubar .grip { margin-right: -3px; }
.menubar .tight { margin-right: -4px; }
.menubar .tight:last-child { margin-right: 0; }
.account { margin-left: auto; border-right: 0; gap: 8px; }
.account span { margin-left: -2px; }
.account button:last-child { gap: 3px; margin-right: -1px; }
.tools { height: 28px; }
.tools .bar { background: linear-gradient(#f2f5fa, #e4e9f4 9px, #d3d8ec 9px, #e0e4f4); }
.files { width: 153px; gap: 5px; }
.files .grip { margin-right: 1px; }
.files button { gap: 3px; }
.build { margin-left: 11px; padding-right: 5px; gap: 6px; }
.build .grip { margin-right: 1px; }
.arr { border: 4px solid transparent; border-top-color: #222; border-bottom-width: 0; }
.arr.dim { border-top-color: #6d717c; }
.arr.small { border-width: 3px 3px 0; }
.sep { width: 1px; height: 21px; background: #82869a; }
.sigma { width: 12px; font-weight: normal; font-size: 14px; }
.combo { position: relative; display: flex; }
.combo select { appearance: none; width: 62px; height: 22px; padding: 0 2px; border: 0; border-radius: 0; background: #fff; font: inherit; color: #000; }
.combo i { position: absolute; right: 1px; top: 1px; width: 13px; height: 20px; border: 1px solid #555; background: #e6e6e6; display: grid; place-items: center; pointer-events: none; }
.combo i::after { content: ""; border: 4px solid transparent; border-top-color: #000; border-bottom: 0; }

/* side panels */
.work { flex: 1; min-height: 0; display: flex; padding-top: 2px; }
.side { flex: none; display: flex; flex-direction: column; }
.nav { width: 199px; margin-right: 5px; border-left: 1px solid #999; }
.mid { width: 194px; margin-right: 6px; }
.ptitle { flex: none; height: 15px; display: flex; align-items: center; gap: 9px; padding-right: 4px; border: 1px solid #707070; border-left: 0; line-height: 13px; }
.ptitle h2 { flex: 1; font-size: 13px; }
.nav .ptitle h2 { margin-left: -1px; }
.ptitle.active { border-color: #0052e0; background: #0052e0; color: #fff; }
.pin { width: 9px; height: 10px; }
.x { width: 9px; height: 9px; }
.navbtn { flex: none; height: 22px; margin: 0 1px; border-bottom: 1px solid #999; text-align: center; }
.ptitle + .navbtn { margin-top: 2px; border-top: 1px solid #bbb; }
.band { flex: none; display: flex; align-items: center; background: linear-gradient(#fbfcfe, #e8ecf5 10px, #d3d8ec 10px, #e3e8f6); font-family: "Noto Sans", "Noto Sans CJK SC", sans-serif; }
.band button { display: flex; align-items: center; gap: 4px; }
.treetools { height: 26px; margin: 1px 1px 0; padding-left: 6px; gap: 7px; }
.tree { flex: 1; margin: 0 2px 0 1px; padding: 1px 0 0 10px; border: 1px solid #828790; border-bottom: 0; background: #fff; overflow: hidden; }
.node { height: 16px; display: flex; align-items: center; gap: 5px; }
.fold { width: 16px; height: 14px; margin-left: 1px; }
.tri { width: 6px; height: 8px; background: #999; clip-path: polygon(0 0, 100% 50%, 0 100%, 0 12%, 16% 22%, 16% 78%, 78% 50%, 0 8%); }
.tri.on { height: 6px; background: #333; clip-path: polygon(100% 0, 100% 100%, 0 100%); }
.tree ul { margin-left: 2px; padding-left: 19px; background: repeating-linear-gradient(#888 0 1px, #fff 1px 2px) 0 0 / 1px 100% no-repeat; }
.tree ul li { display: flex; align-items: center; height: 16px; padding-left: 11px; gap: 5px;
  background: repeating-linear-gradient(#888 0 1px, #fff 1px 2px) 0 0 / 1px 100% no-repeat, repeating-linear-gradient(90deg, #888 0 1px, #fff 1px 2px) 0 8px / 11px 1px no-repeat; }
.tree ul li:last-child { background-size: 1px 9px, 11px 1px; }
.tree ul svg { width: 15px; height: 14px; }
.tree ul .mono { margin-left: -4px; }
.sel { display: flex; align-items: center; gap: 5px; height: 16px; margin-left: -3px; padding: 0 4px 0 2px; border: 1px solid #d9d9d9; border-radius: 3px; background: linear-gradient(#fafafa, #e8e8e8); }
.parts { flex: 474 1 0; display: flex; flex-direction: column; min-height: 0; }
.props { flex: 359 1 0; display: flex; flex-direction: column; min-height: 0; margin-top: 7px; }
.props .box { margin-top: 2px; }
.box { flex: 1; min-height: 0; border: 1px solid #a0a0a0; background: #fff; overflow: hidden; }
.mid .box { margin-left: 1px; padding: 1px; }
.parttools { height: 28px; padding-left: 5px; gap: 6px; }
.find { flex: none; display: flex; align-items: center; height: 24px; margin-bottom: 2px; }
.find input { flex: 1; min-width: 0; height: 23px; padding: 0 3px 2px; border: 1px solid #dcdfe6; background: #fff; font: inherit; }
.find input::placeholder { color: #777; opacity: 1; }
.find button { width: 25px; display: flex; justify-content: center; }

/* grids */
.grid { border-collapse: separate; border-spacing: 0; table-layout: fixed; line-height: 16px; }
.grid th, .grid td { height: 19px; padding: 0 2px; border: 1px solid #c0c0c0; border-width: 0 1px 1px 0; font-weight: normal; white-space: nowrap; overflow: hidden; }
.grid td { padding: 0 1px; }
.grid th { background: linear-gradient(#fff, #efefef); }
.grid .hot { background: linear-gradient(#fbd99c, #f0bb57); color: #5b0a5b; }
.grid .cur th { background: #ffd28b; color: #5b0a5b; }
.partgrid { width: 100%; }
.partgrid th { height: 22px; }
.c26 { width: 26px; }
.w21 { width: 21px; } .w37 { width: 37px; } .w39 { width: 39px; } .w46 { width: 46px; } .w61 { width: 61px; } .w79 { width: 79px; } .w80 { width: 80px; }
.w81 { width: 81px; } .w101 { width: 101px; } .w121 { width: 121px; } .w151 { width: 151px; } .w167 { width: 167px; } .w199 { width: 199px; } .w201 { width: 201px; }

/* centre */
.center { flex: 1; min-width: 0; display: flex; flex-direction: column; }
.upper { flex: 424 1 0; min-height: 0; display: flex; flex-direction: column; }
.lower { flex: 411 1 0; min-height: 0; display: flex; flex-direction: column; margin-top: 5px; border-left: 1px solid #999; }
.maintools { height: 27px; padding-left: 6px; gap: 7px; }
.maintools button { flex: none; }
.maintools .sep { margin: 0 -1px 0 -2px; }
.maintools .last { margin-right: -7px; }
.maintools button:disabled { color: #777a85; }
.upper .box { margin-left: 1px; padding: 1px; }
.maingrid { width: 1190px; }
.maingrid th { height: 21px; }
.tabs { flex: none; height: 20px; display: flex; gap: 5px; border: 1px solid #999; border-left: 0; }
.tabs button { padding-bottom: 3px; }
.tabs .on { margin-right: -2px; padding: 2px 3px 0; border-right: 1px solid #808080; }
.lower .box { margin: 1px 0 0 1px; padding: 1px; border-right: 0; border-bottom: 0; }
.rows { width: 280px; }
.rows thead th { height: 21px; }
.rows tbody th { font-family: "DejaVu Sans Mono", monospace; font-size: 10px; }
.rows .cur td:nth-child(2) { background: #dfeeff; }

/* import dialog */
.dialog {
  position: absolute; left: 636px; top: 297px; width: 648px;
  padding: 0 6px 7px;
  border: 1px solid #1c2733; border-radius: 7px;
  background: linear-gradient(100deg, #d6eaff, #b5d8fb 40%, #b8dcff 70%, #cfe6fd);
  box-shadow: inset 0 0 0 1px #f2faff, 3px 5px 12px 3px #0009;
}
.dlghead { display: flex; height: 28px; align-items: center; justify-content: space-between; }
.dlghead h2 { padding-top: 2px; font-family: "Noto Sans", "Noto Sans CJK SC", sans-serif; text-shadow: 0 0 6px #fff, 0 0 6px #fff; }
.dlghead button { align-self: flex-start; display: grid; place-items: center; width: 47px; height: 19px; border: 1px solid #5d2a2c; border-top: 0; border-radius: 0 0 5px 5px; background: linear-gradient(#e9aaa0, #cf6a5c 48%, #b83a28 52%, #d7624c); box-shadow: 0 0 0 1px #ffffffa0; }
.dlgbody { padding: 8px 19px 9px 13px; border: 1px solid #5c6b7a; background: #f0f0f0; }
.groups { display: flex; gap: 14px; }
fieldset { margin: 0; min-width: 0; border: 1px solid #d5dfe5; border-radius: 4px; box-shadow: inset 0 0 0 1px #fff; }
legend { padding: 0 1px; line-height: 16px; }
.floors { width: 176px; padding: 4px 8px 7px; }
.floors legend { margin-left: -3px; }
.types { flex: 1; padding: 6px 15px 7px 1px; }
.types legend { margin-left: 4px; }
.floorlist { height: 262px; width: 160px; padding: 1px 0 0 13px; border: 1px solid #828790; background: #fff; }
.floorlist li { height: 14px; padding-left: 12px; background: repeating-linear-gradient(#999 0 1px, #fff 1px 2px) 0 0 / 1px 100% no-repeat, repeating-linear-gradient(90deg, #999 0 1px, #fff 1px 2px) 0 7px / 10px 1px no-repeat; }
.floorlist li:first-child { background-position: 0 8px, 0 7px; }
.floorlist li:last-child { background-size: 1px 8px, 10px 1px; }
.floorlist label { display: flex; align-items: center; gap: 4px; height: 14px; line-height: 14px; }
input[type="checkbox"] {
  appearance: none; flex: none; display: block; width: 13px; height: 13px; margin: 0; border: 1px solid #8e8f8f;
  background: url("data:image/svg+xml,%3Csvg xmlns='http://www.w3.org/2000/svg' viewBox='0 0 11 11'%3E%3Cpath d='M2.500 5.500 5 8.500 8.500 2' fill='none' stroke='%233c55a0' stroke-width='2'/%3E%3C/svg%3E") center / 11px 11px no-repeat, linear-gradient(135deg, #cfd4da, #fbfbfb);
  box-shadow: inset 0 0 0 1px #fff;
}
.btns { display: flex; gap: 10px; align-items: center; }
.floors .btns { margin: 15px 0 0 1px; }
.types .btns { margin: 7px -4px 0 8px; }
.btn { width: 73px; height: 23px; border: 1px solid #707070; border-radius: 3px; background: linear-gradient(#f3f3f3, #ebebeb 50%, #dddddd 50%, #cfcfcf); box-shadow: inset 0 0 0 1px #fcfcfc; text-align: center; }
.btn.wide { width: 87px; }
.btn.red { width: 127px; color: #f00; font-weight: bold; }
.push { margin-left: auto; }
.typebox { display: flex; height: 268px; border: 1px solid #a0a0a0; background: #fff; padding: 1px; overflow: hidden; }
.typegrid { width: 370px; flex: none; align-self: flex-start; }
.typegrid thead th { height: 23px; }
.typegrid td.top { padding-left: 20px; }
.typegrid td input { margin: 0 auto; }
.typegrid .focus { background: #dfeeff; outline: 1px dotted #000; outline-offset: -1px; }
.par { display: flex; align-items: center; gap: 5px; height: 18px; padding-left: 1px; }
.par button { width: 13px; height: 13px; border: 1px solid #aaa; background: linear-gradient(#000, #000) center / 7px 1px no-repeat, #e9edf0; box-shadow: inset 0 0 0 1px #fff; }
.kid { height: 18px; padding-left: 29px; line-height: 18px; background: linear-gradient(#b0b0b0, #b0b0b0) 7px 0 / 1px 100% no-repeat, linear-gradient(#b0b0b0, #b0b0b0) 7px 9px / 17px 1px no-repeat; }
.kid.end { background-size: 1px 9px, 17px 1px; }
.scroll { display: flex; flex-direction: column; align-items: center; width: 16px; margin-left: 3px; background: #f1f1f1; }
.scroll i { flex: none; }
.up { margin-top: 7px; border: 3px solid transparent; border-bottom-color: #333; border-top: 0; }
.thumb { margin-top: 8px; width: 14px; height: 38px; border: 1px solid #979797; border-radius: 2px; background: repeating-linear-gradient(#666 0 1px, #0000 1px 3px) center / 7px 9px no-repeat, linear-gradient(90deg, #f5f5f5, #cdcdcd); }
.down { margin: auto 0 7px; border: 3px solid transparent; border-top-color: #333; border-bottom: 0; }
.also { display: flex; align-items: center; gap: 3px; width: fit-content; margin: 17px 38px 0 auto; }
.foot { margin: 7px 2px 0 10px; gap: 8px; }

/* speed widget */
.speed { position: absolute; right: 0; bottom: 183px; display: flex; align-items: center; width: 91px; height: 40px; padding-left: 22px; border: 1px solid #b5b5b5; border-right: 0; border-radius: 0 14px 14px 0; background: linear-gradient(#f5f5f5, #dcdcdc); box-shadow: 0 4px 8px #0004; font: 10px/15px "Noto Sans", sans-serif; }
.rates { width: 46px; }
.rates span { display: flex; align-items: center; justify-content: space-between; }
.plus { width: 20px; height: 20px; margin-left: 4px; }
.ball { position: absolute; left: -28px; top: -6px; display: grid; place-items: center; width: 50px; height: 50px; border: 1px solid #a5a5a5; border-radius: 50%; background: #f4f4f4; box-shadow: 0 6px 10px #0006; }
.ball span { display: grid; place-items: center; width: 44px; height: 44px; border: 1px solid #128a4a; border-radius: 50%; background: radial-gradient(ellipse 8px 3px at 22px 5px, #fff, #fff0), linear-gradient(#0d6e4a, #4fa58a 9px, #62df6c 10px, #40c95b); color: #fff; font: 14px/16px "Liberation Sans", sans-serif; }
```
